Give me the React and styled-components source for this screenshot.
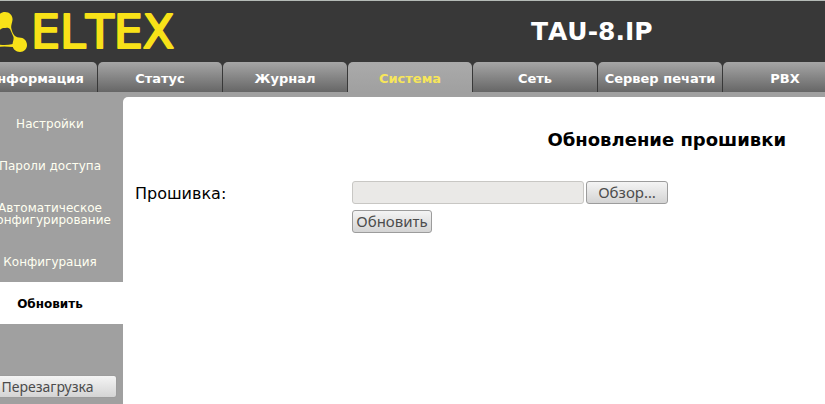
import React from 'react';
import styled, { createGlobalStyle, css } from 'styled-components';

const GlobalStyle = createGlobalStyle`
  *, *::before, *::after { box-sizing: border-box; }
  html, body { margin: 0; height: 100%; }
  body { background: #a0a0a0; font-family: "DejaVu Sans", sans-serif; color: #000; }
  #root { height: 100%; }
`;

const Viewport = styled.div`
  min-height: 100%;
  display: flex;
  overflow: hidden;
`;

const Page = styled.div`
  flex: none;
  width: 150vw;
  margin-left: -27px;
  display: flex;
  flex-direction: column;
`;

const Header = styled.header`
  display: grid;
  grid-template-columns: 1fr auto 1fr;
  align-items: center;
  height: 62px;
  border-top: 1px solid #b4bab6;
  background: #383838;
`;

const Logo = styled.svg`
  display: block;
  width: 210px;
  height: 60px;
  font-family: "DejaVu Sans", sans-serif;
  font-size: 46px;
  font-kerning: none;
`;

const DeviceName = styled.h1`
  margin: 0;
  color: #fff;
  font-size: 25px;
  font-kerning: none;
  line-height: 28px;
`;

const Tabs = styled.nav`
  display: flex;
  gap: 1px;
  background: #383838;
  border-bottom: 5px solid #a0a0a0;
`;

const Tab = styled.a`
  flex: none;
  width: 124px;
  height: 30px;
  border-radius: 5px 5px 0 0;
  background: linear-gradient(#a6a6a6, #666);
  color: #fff;
  font-size: 13px;
  font-weight: bold;
  line-height: 34px;
  text-align: center;
  text-decoration: none;
  white-space: nowrap;
  ${(p) => p.$active && css`
    background: linear-gradient(#aaa, #a0a0a0);
    color: #f7e65a;
  `}
`;

const Body = styled.div`
  flex: 1;
  display: flex;
  background: #a0a0a0;
`;

const Sidebar = styled.aside`
  flex: none;
  width: 150px;
  padding-top: 5px;
`;

const SideLink = styled.a`
  display: block;
  padding: 16px 0 14px 4px;
  color: #fffff0;
  font-size: 12px;
  line-height: 12px;
  text-align: center;
  text-decoration: none;
  ${(p) => p.$active && css`
    background: #fff;
    color: #000;
    font-weight: bold;
  `}
`;

const Main = styled.main`
  flex: 1;
  padding: 32px 12px;
  border-top-left-radius: 5px;
  background: #fff;
`;

const Title = styled.h2`
  margin: 0 0 30px;
  font-size: 18px;
  line-height: 22px;
  text-align: center;
`;

const Form = styled.form`
  display: grid;
  grid-template-columns: 217px 1fr;
  row-gap: 3px;
`;

const Label = styled.label`
  font-size: 16px;
  line-height: 26px;
`;

const Controls = styled.div`
  grid-column: 2;
  display: flex;
  gap: 2px;
`;

const FileName = styled.input`
  width: 232px;
  height: 23px;
  border: 1px solid #c8c7c4;
  border-radius: 3px;
  background: #eae9e7;
`;

const Button = styled.button`
  width: ${(p) => p.$width}px;
  height: 23px;
  padding: 0;
  border: 1px solid #9c9c9c;
  border-radius: 3px;
  background: linear-gradient(#f4f4f4, #d4d4d4);
  color: #4c4c4c;
  font-family: "Noto Sans", sans-serif;
  font-size: ${(p) => (p.$compact ? 14 : 15)}px;
  line-height: 21px;
  text-align: center;
`;

const Reboot = styled.div`
  padding: 51px 0 6px 5px;
`;

const tabs = ['Информация', 'Статус', 'Журнал', 'Система', 'Сеть', 'Сервер печати', 'PBX'];
const sections = ['Настройки', 'Пароли доступа', 'Автоматическое конфигурирование', 'Конфигурация', 'Обновить'];

function EltexLogo() {
  return (
    <Logo viewBox="0 0 210 60" role="img" aria-label="ELTEX" fill="#f8e218">
      <path d="M32 10C37 10 40 14 39.5 18C39 22 37.5 24 38.5 27C39.5 31 41 35 46 35.5C51 35.5 54 39 54 43C54 47 51 50 47 50C43 50 39.5 47 39.5 43C39.5 40 41 38 40.5 35L37 27C35 25 33 26 30 26C26 27 25 31 22 36C24 38 25 41 24 43C23 48 19 50 16 50C12 50 9 47 9 43C9 39 12 35 17 35C21 34 25 27 25 22C22 16 26 10 32 10Z" />
      <path d="M24 42Q31 44 40 42V45Q31 44 24 45Z" />
      <text x="58" y="46" stroke="#f8e218" strokeWidth="2" strokeLinejoin="round">ELTEX</text>
    </Logo>
  );
}

export default function App() {
  return (
    <>
      <GlobalStyle />
      <Viewport>
        <Page>
          <Header>
            <EltexLogo />
            <DeviceName>TAU-8.IP</DeviceName>
          </Header>
          <Tabs>
            {tabs.map((name) => (
              <Tab key={name} href="#" $active={name === 'Система'}>{name}</Tab>
            ))}
          </Tabs>
          <Body>
            <Sidebar>
              {sections.map((name) => (
                <SideLink key={name} href="#" $active={name === 'Обновить'}>{name}</SideLink>
              ))}
              <Reboot>
                <Button type="button" $width={139} $compact>Перезагрузка</Button>
              </Reboot>
            </Sidebar>
            <Main>
              <Title>Обновление прошивки</Title>
              <Form>
                <Label htmlFor="firmware">Прошивка:</Label>
                <Controls>
                  <FileName id="firmware" type="text" readOnly />
                  <Button type="button" $width={82}>Обзор…</Button>
                </Controls>
                <Controls>
                  <Button type="submit" $width={80}>Обновить</Button>
                </Controls>
              </Form>
            </Main>
          </Body>
        </Page>
      </Viewport>
    </>
  );
}
